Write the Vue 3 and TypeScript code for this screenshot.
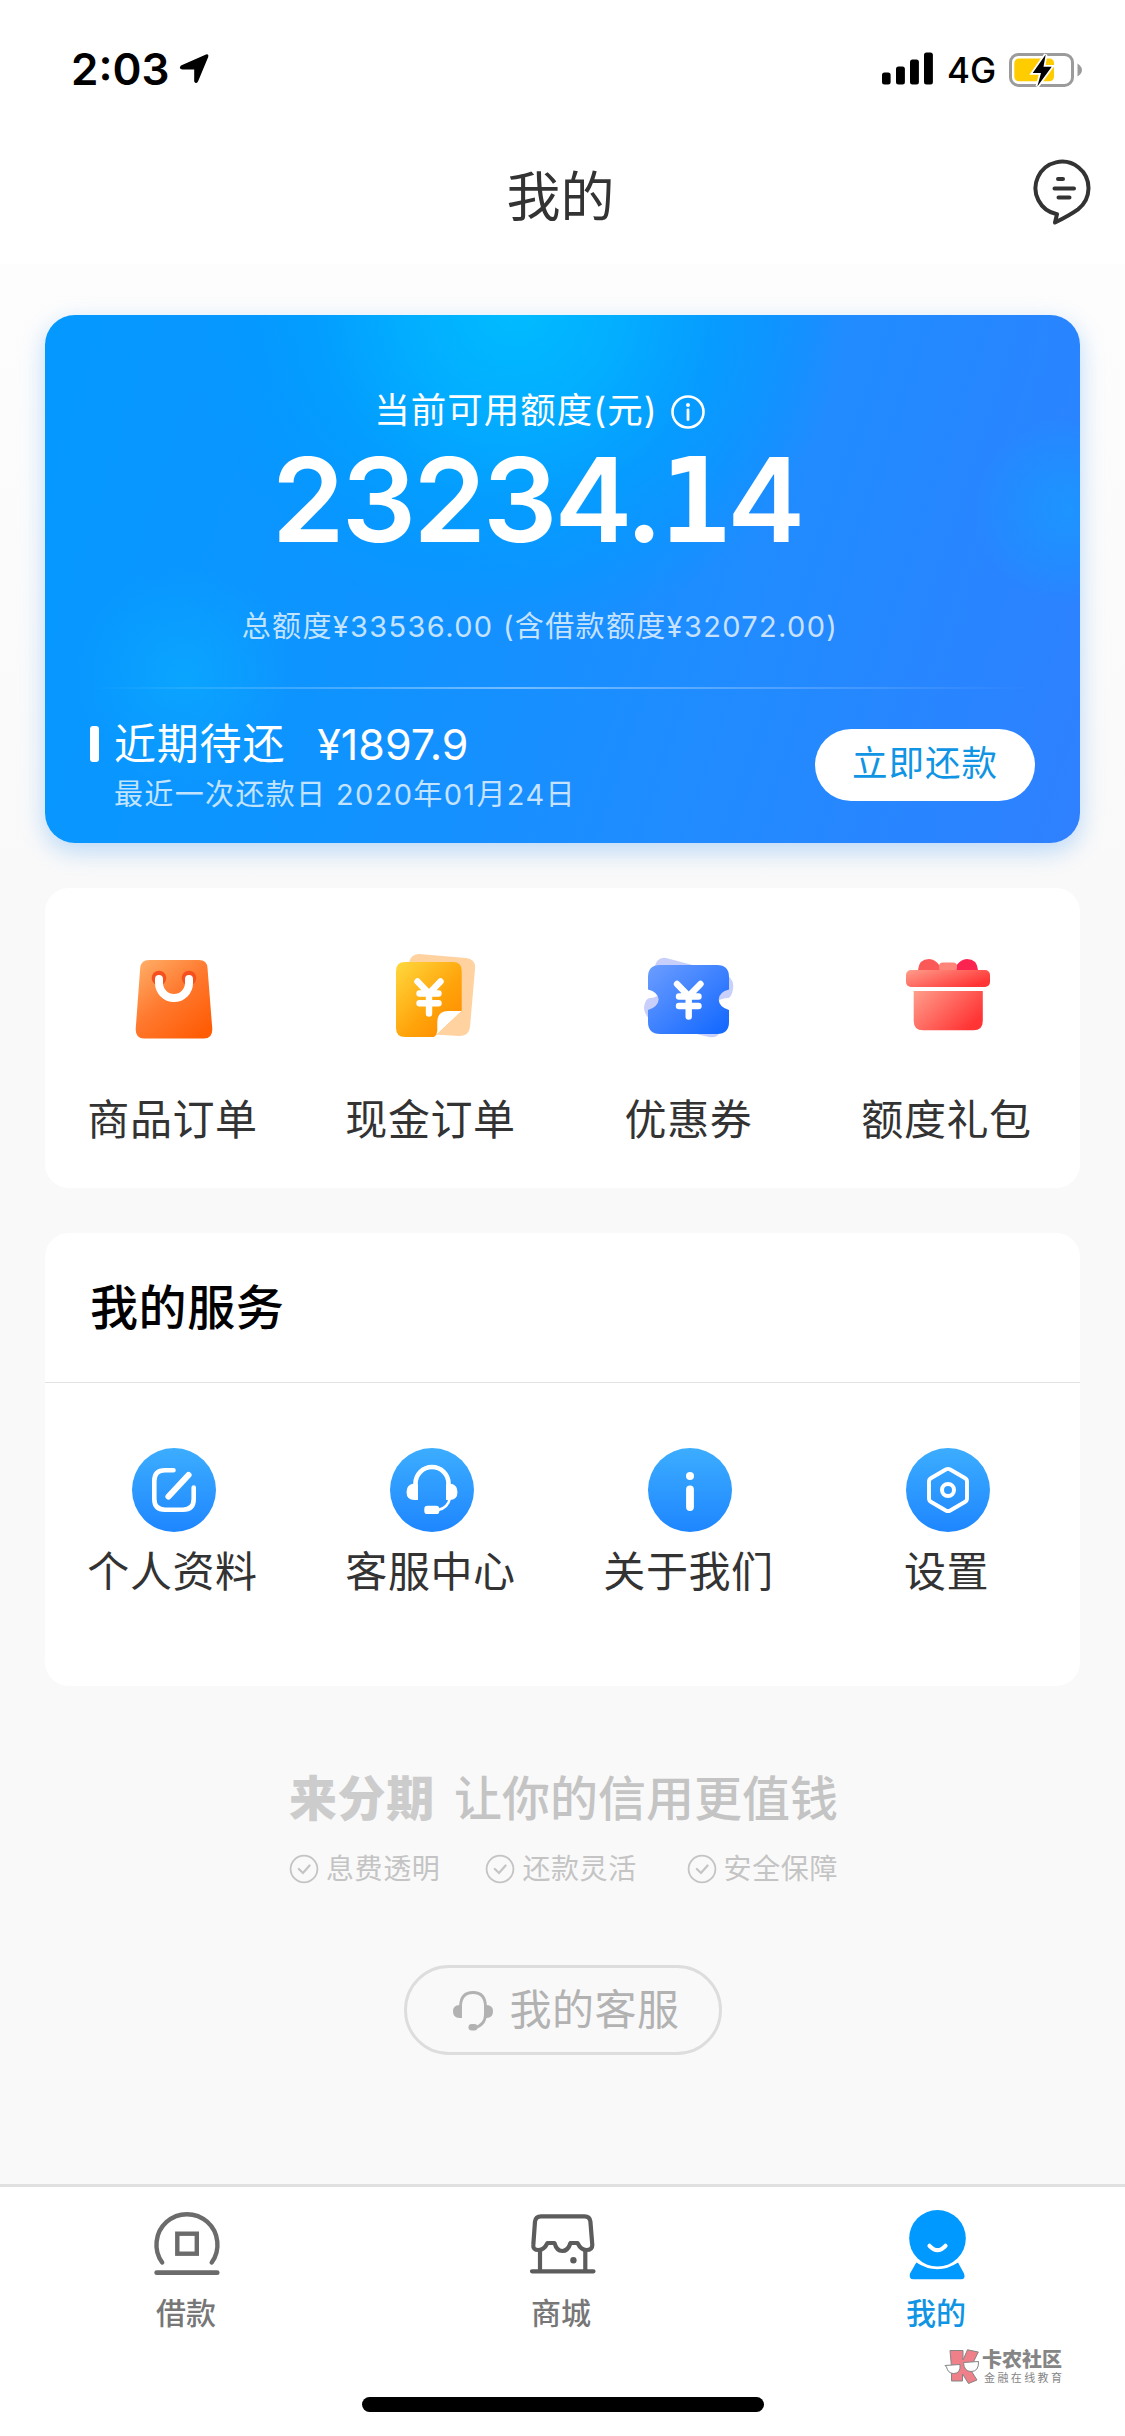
<script setup lang="ts">
interface Entry {
  key: string
  label: string
}

const orders: Entry[] = [
  { key: 'bag', label: '商品订单' },
  { key: 'cash', label: '现金订单' },
  { key: 'coupon', label: '优惠券' },
  { key: 'gift', label: '额度礼包' },
]

const services: Entry[] = [
  { key: 'profile', label: '个人资料' },
  { key: 'support', label: '客服中心' },
  { key: 'about', label: '关于我们' },
  { key: 'settings', label: '设置' },
]

const promises: string[] = ['息费透明', '还款灵活', '安全保障']

const tabs: Entry[] = [
  { key: 'loan', label: '借款' },
  { key: 'mall', label: '商城' },
  { key: 'me', label: '我的' },
]
const activeTab = 'me'
</script>

<template>
  <div class="screen">
    <header class="header">
      <div class="status">
        <span class="time">2:03</span>
        <svg class="locate" width="32" height="32" viewBox="0 0 32 32">
          <path d="M3 12.5 28 1.5Q31 .8 30.2 4L20 28.500Q18 31.500 16.200 28.500V16.500H4.500Q0 15.500 3 12.500Z" />
        </svg>
        <div class="status-right">
          <svg width="52" height="34" viewBox="0 0 52 34">
            <rect x="0" y="20.500" width="8.600" height="12" rx="2.500" />
            <rect x="14" y="14.500" width="8.900" height="18" rx="2.500" />
            <rect x="28" y="7.500" width="8.900" height="25" rx="2.500" />
            <rect x="42" y=".5" width="8.900" height="32" rx="2.500" />
          </svg>
          <span class="net">4G</span>
          <svg width="76" height="40" viewBox="0 0 76 40">
            <rect x="3.500" y="5.400" width="62" height="31" rx="8" fill="#fff" stroke="#9b9b9b" stroke-width="3" />
            <rect x="7.300" y="9.500" width="39.700" height="22.700" rx="4.500" fill="#ffcc00" />
            <path d="M70.500 14.500Q75 17.500 75 21T70.500 27.500Z" fill="#9b9b9b" />
            <path d="M38.700 5.500 25.700 24H34L30.300 37.500 44.700 17.700H36.500Z" fill="#000" stroke="#fff" stroke-width="3.500" paint-order="stroke" />
          </svg>
        </div>
      </div>
      <div class="nav">
        <h1>我的</h1>
        <svg class="message" width="60" height="68" viewBox="0 0 60 68" fill="none" stroke="#333" stroke-width="4" stroke-linecap="round" stroke-linejoin="round">
          <path d="M25 55.200A26.500 26.500 0 1 1 46 50.300Q38 56 23 63.500L25 55.200" />
          <path d="M26 20H31M22.500 29.500H42M26.500 38.500H37.500" />
        </svg>
      </div>
    </header>

    <main class="body">
      <section class="quota">
        <div class="quota-main">
          <div class="quota-title">
            <span>当前可用额度(元)</span>
            <svg width="36" height="36" viewBox="0 0 36 36">
              <circle cx="18" cy="18" r="15.500" fill="none" stroke="#fff" stroke-width="2.600" />
              <circle cx="18" cy="11" r="2" fill="#fff" />
              <path d="M18 16V25.500" stroke="#fff" stroke-width="2.800" stroke-linecap="round" />
            </svg>
          </div>
          <div class="amount">23234<span class="dot">.</span><span class="one">1</span>4</div>
          <div class="total">总额度¥33536.00 (含借款额度¥32072.00)</div>
        </div>
        <div class="rule"></div>
        <div class="due">
          <i class="mark"></i>
          <div class="due-text">
            <div class="due-sum"><span>近期待还</span><b>¥1897.9</b></div>
            <div class="due-date">最近一次还款日 2020年01月24日</div>
          </div>
          <button class="repay"><span>立即还款</span></button>
        </div>
      </section>

      <section class="card orders">
        <div v-for="o in orders" :key="o.key" class="cell">
          <svg v-if="o.key === 'bag'" width="90" height="90" viewBox="0 0 90 90">
            <defs>
              <linearGradient id="bag" x1="0" y1="0" x2=".8" y2="1">
                <stop offset="0" stop-color="#ffb16a" /><stop offset=".5" stop-color="#ff7a30" /><stop offset="1" stop-color="#ff5c05" />
              </linearGradient>
            </defs>
            <path d="M20 5H70Q78 5 78.500 13L83.300 74Q83.500 83.500 75 83.500H15Q6.500 83.500 6.700 74L11.200 13Q12 5 20 5Z" fill="url(#bag)" />
            <circle cx="30" cy="23" r="7.300" fill="#f4511e" />
            <circle cx="60" cy="23" r="7.300" fill="#f4511e" />
            <path d="M30 24V28A15 15 0 0 0 60 28V24" fill="none" stroke="#fff" stroke-width="8" stroke-linecap="round" />
          </svg>
          <svg v-else-if="o.key === 'cash'" width="90" height="90" viewBox="0 0 90 90" overflow="visible">
            <defs>
              <linearGradient id="cash" x1="0" y1="0" x2=".9" y2="1">
                <stop offset="0" stop-color="#ffd93e" /><stop offset=".6" stop-color="#ffa30a" /><stop offset="1" stop-color="#ff8a00" />
              </linearGradient>
            </defs>
            <path d="M32-1 79 3Q89 4 88 14L83 72Q82 81 72 81L48 79.500 22 9Q23-1 32-1Z" fill="#ffd2a0" />
            <path d="M18 7H66Q74.700 7 74.700 16V56L47 82H18Q9 82 9 73V16Q9 7 18 7Z" fill="url(#cash)" />
            <path d="M74.700 56H61Q50.500 56 50.300 67V76Q50 80 47 82Z" fill="#fff" />
            <path d="M30.500 26.500 42 38.500 53.500 26.500M32.500 38.500H51.500M32.500 48.200H51.500M42 38.500V58.500" fill="none" stroke="#fff" stroke-width="6.400" stroke-linecap="round" stroke-linejoin="round" />
          </svg>
          <svg v-else-if="o.key === 'coupon'" width="90" height="90" viewBox="0 0 90 90" overflow="visible">
            <defs>
              <linearGradient id="coupon" x1="0" y1="0" x2="1" y2="1">
                <stop offset="0" stop-color="#6c9dff" /><stop offset="1" stop-color="#0f66ff" />
              </linearGradient>
            </defs>
            <path d="M21 3 76 17.500Q90 22 88 34 86.500 44 81 43.500 73 43 71 50 73 58 80 60L77 75Q72 84 64 82L14 70Q0 64-1 53 0 43 5 43 11 43 14 39L9 14Q12 1 21 3Z" fill="#c8cffa" />
            <path d="M3 34.500Q8 34 10 40L3 42ZM84 43Q77 43 75 48 76 52 84 55Z" fill="#fff" />
            <path d="M15 10H72Q84 10 84 22V34.500Q74 37 73.700 44.500 74 52 84 55V67Q84 79 72 79H15Q3 79 3 67V55Q13 52 13.700 44.500 13 37 3 34.500V22Q3 10 15 10Z" fill="url(#coupon)" />
            <path d="M32 29 43.700 41 55.500 29M34 41.500H53.500M34 51H53.500M43.700 41V61.500" fill="none" stroke="#fff" stroke-width="6.400" stroke-linecap="round" stroke-linejoin="round" />
          </svg>
          <svg v-else width="90" height="90" viewBox="0 0 90 90">
            <defs>
              <linearGradient id="gift" x1="0" y1="0" x2="1" y2=".6">
                <stop offset="0" stop-color="#ff9e8c" /><stop offset="1" stop-color="#ff3535" />
              </linearGradient>
            </defs>
            <path d="M15 15Q16 4 26 4 32 4 37 11V15Z" fill="#fb5858" />
            <path d="M53 15V11Q58 4 64 4 74 4 75 15Z" fill="#fb2450" />
            <rect x="36" y="7.500" width="18" height="9" rx="4" fill="#ff8578" />
            <rect x="3" y="15" width="84" height="17" rx="5" fill="url(#gift)" />
            <path d="M10.700 36H79.800V66Q79.800 75.300 70.500 75.300H20Q10.700 75.300 10.700 66Z" fill="url(#gift)" />
          </svg>
          <span class="cell-label">{{ o.label }}</span>
        </div>
      </section>

      <section class="card services">
        <h2>我的服务</h2>
        <div class="service-row">
          <div v-for="s in services" :key="s.key" class="cell">
            <svg width="84" height="84" viewBox="0 0 84 84" fill="none" stroke="#fff" stroke-linecap="round" stroke-linejoin="round">
              <defs>
                <linearGradient :id="'svc-' + s.key" x1="0" y1="0" x2="0" y2="1">
                  <stop offset="0" stop-color="#3cadff" /><stop offset="1" stop-color="#1e86ff" />
                </linearGradient>
              </defs>
              <circle cx="42" cy="42" r="42" :fill="`url(#svc-${s.key})`" stroke="none" />
              <template v-if="s.key === 'profile'">
                <path d="M41.500 22.300H33Q22.300 22.300 22.300 33V51Q22.300 61.700 33 61.700H51Q61.700 61.700 61.700 51V39.500" stroke-width="4.600" />
                <path d="M36.500 48.500 56.500 27" stroke-width="6.200" />
              </template>
              <template v-else-if="s.key === 'support'">
                <path d="M25.500 38V35.500A16.500 16.500 0 0 1 58.500 35.500V38" stroke-width="4.600" />
                <path d="M28 36.500V52H24.500Q16.500 52 16.500 44T24.500 35.500ZM56 36.500V52H59.500Q67.500 52 67.500 44T59.500 35.500Z" fill="#fff" stroke="none" />
                <path d="M60 50Q58 60 48 62" stroke-width="2.600" />
                <rect x="34.300" y="57.800" width="15" height="8.300" rx="3.200" fill="#fff" stroke="none" />
              </template>
              <template v-else-if="s.key === 'about'">
                <circle cx="42" cy="28" r="4" fill="#fff" stroke="none" />
                <path d="M42 41.500V59" stroke-width="7.800" />
              </template>
              <template v-else>
                <path d="M39.800 21.500Q42 20.300 44.200 21.500L58.800 30Q61 31.300 61 33.500V50.500Q61 52.700 58.800 54L44.200 62.500Q42 63.700 39.800 62.500L25.200 54Q23 52.700 23 50.500V33.500Q23 31.300 25.200 30Z" stroke-width="3.900" />
                <circle cx="42" cy="42" r="6" stroke-width="4" />
              </template>
            </svg>
            <span class="cell-label">{{ s.label }}</span>
          </div>
        </div>
      </section>

      <section class="slogan">
        <div class="slogan-line"><b>来分期</b><span>让你的信用更值钱</span></div>
        <div class="promises">
          <div v-for="p in promises" :key="p" class="promise">
            <svg width="30" height="30" viewBox="0 0 30 30" fill="none" stroke="#c4c4c4">
              <circle cx="15" cy="15" r="13.400" stroke-width="1.800" />
              <path d="M9.800 15 14 19 20.600 11.500" stroke-width="2.200" stroke-linecap="round" />
            </svg>
            <span>{{ p }}</span>
          </div>
        </div>
      </section>

      <div class="contact">
        <svg width="42" height="42" viewBox="0 0 42 42" fill="none">
          <path d="M8.500 17Q9 3.500 21 3.500T33.500 17V25Q33.500 36 22 39" stroke="#b2b2b2" stroke-width="2.800" />
          <path d="M10 16V29H7.500Q1 29 1 22.500T7.500 16ZM32 16V29H34.500Q41 29 41 22.500T34.500 16Z" fill="#b2b2b2" />
          <rect x="16.500" y="35" width="9" height="6.500" rx="3.200" fill="#b2b2b2" />
        </svg>
        <span>我的客服</span>
      </div>
    </main>

    <footer class="tabbar">
      <div v-for="t in tabs" :key="t.key" class="tab" :class="{ active: t.key === activeTab }">
        <svg v-if="t.key === 'loan'" width="72" height="72" viewBox="0 0 72 72" fill="none" stroke="#6b6b6b" stroke-width="4.400" stroke-linecap="round">
          <path d="M10.200 54.500A30.500 30.500 0 1 1 59.700 54.500" />
          <rect x="25.300" y="25.700" width="19.500" height="20" />
          <path d="M4.700 64.700H65.200" stroke-width="4.800" />
        </svg>
        <svg v-else-if="t.key === 'mall'" width="72" height="72" viewBox="0 0 72 72" fill="none" stroke="#5c5c5c" stroke-width="4.200" stroke-linecap="round" stroke-linejoin="round">
          <path d="M14 8.300H57.500Q62.800 8.300 63.400 13.500L65.300 37Q65.300 42 59.500 42 54 42 50.500 35H43.500Q41 43 35.300 43T27.500 35H20.500Q17 42 11.500 42 5.800 42 6.300 37L8 13.500Q8.700 8.300 14 8.300Z" />
          <path d="M13 43V63M58.300 43V63M5 63.300H66.500" />
          <circle cx="46.400" cy="52.300" r="3.200" fill="#5c5c5c" stroke="none" />
        </svg>
        <svg v-else width="72" height="72" viewBox="0 0 72 72">
          <circle cx="35.500" cy="30.300" r="28.300" fill="#0099ff" />
          <path d="M27.500 37.800Q35.500 46.500 43.500 37.800" fill="none" stroke="#fff" stroke-width="4.200" stroke-linecap="round" />
          <path d="M14.300 54.500Q35.500 68 56 54.500L62 65.500Q64 71.300 59 71.300H11.500Q6.500 71.300 8 65.500Z" fill="#0099ff" />
        </svg>
        <span>{{ t.label }}</span>
      </div>
      <div class="watermark">
        <svg width="36" height="38" viewBox="0 0 36 38" stroke="#858585" stroke-width="1">
          <path d="M6 2.500H19V12L23.500 1.800 34.300 4 26 21 33 32 24.500 35.500 18.500 26V33H7.500V19Z" fill="#ef7f88" />
          <path d="M1 17.500 16 16.500Q17 25.500 9.500 25.500 4 25.500 2.500 19ZM19.500 14.500 34.500 13.500Q35 23.500 27 23.500 20 23.500 19.500 14.500Z" fill="#fff" />
        </svg>
        <div class="wm-text"><b>卡农社区</b><span>金融在线教育</span></div>
      </div>
      <div class="home"></div>
    </footer>
  </div>
</template>

<style>
body {
  margin: 0;
  background: #f9f9f9;
}
</style>

<style scoped>
.screen {
  width: 1125px;
  height: 2436px;
  display: flex;
  flex-direction: column;
  overflow: hidden;
  background: linear-gradient(#fdfdfd 264px, #f9f9f9 900px);
  font-family: Inter, 'Noto Sans CJK SC', sans-serif;
  color: #333;
}
svg {
  display: block;
  flex: none;
}
.header {
  height: 264px;
  background: #fff;
  flex: none;
}
.status {
  height: 138px;
  display: flex;
  align-items: center;
  padding: 0 42px 0 71px;
  color: #000;
}
.time {
  width: 107px;
  font-size: 44px;
  font-weight: 600;
  line-height: 60px;
}
.status-right {
  margin-left: auto;
  display: flex;
  align-items: center;
}
.net {
  margin: 2px 12px 0 13px;
  width: 48px;
  font-size: 35px;
  font-weight: 500;
  line-height: 44px;
}
.nav {
  height: 126px;
  display: flex;
  align-items: center;
  justify-content: center;
  position: relative;
}
.nav h1 {
  margin: -6px 0 0 -4px;
  font-size: 54px;
  line-height: 72px;
  font-weight: 400;
}
.message {
  position: absolute;
  right: 33px;
  top: 21px;
}
.body {
  flex: 1;
  padding: 51px 45px 0;
  display: flex;
  flex-direction: column;
  align-items: center;
}
.quota {
  width: 1035px;
  height: 528px;
  box-sizing: border-box;
  border-radius: 30px;
  color: #fff;
  background:
    radial-gradient(circle at 470px -10px, #00bcff 0, rgba(0, 178, 255, 0.85) 110px, rgba(0, 160, 255, 0.75) 200px, rgba(0, 155, 255, 0.45) 270px, rgba(0, 150, 255, 0) 330px),
    radial-gradient(circle at 1025px 195px, rgba(20, 160, 255, 0.6) 0, rgba(25, 150, 255, 0.4) 60px, rgba(25, 150, 255, 0) 95px),
    radial-gradient(circle at 140px 360px, rgba(10, 175, 255, 0.6) 0, rgba(10, 160, 255, 0) 110px),
    linear-gradient(108deg, #0499ff 0%, #0f93ff 36%, #218bff 68%, #2f80ff 100%);
  box-shadow: 0 8px 24px rgba(50, 145, 245, 0.32);
}
.quota-main {
  height: 372px;
  padding: 75px 45px 0 0;
  box-sizing: border-box;
  display: flex;
  flex-direction: column;
  align-items: center;
}
.quota-title {
  height: 44px;
  display: flex;
  align-items: center;
  gap: 12px;
  font-size: 35.5px;
  line-height: 44px;
  letter-spacing: 1px;
}
.quota-title span {
  margin-top: -2px;
}
.amount {
  height: 100px;
  margin-top: 16px;
  margin-left: -6px;
  line-height: 100px;
  font-size: 117px;
  font-weight: 600;
  letter-spacing: -3px;
  white-space: nowrap;
}
.one {
  font-family: 'DejaVu Sans Mono', monospace;
  font-weight: 700;
}
.total {
  margin-top: 57px;
  line-height: 40px;
  font-size: 29px;
  letter-spacing: 1.350px;
  color: rgba(255, 255, 255, 0.75);
  white-space: nowrap;
}
.rule {
  height: 2px;
  margin: 0 45px;
  background: linear-gradient(90deg, rgba(255, 255, 255, 0), rgba(255, 255, 255, 0.4) 45%, rgba(255, 255, 255, 0));
}
.due {
  display: flex;
  padding: 30px 45px 0;
}
.mark {
  width: 9px;
  height: 36px;
  margin-top: 7px;
  border-radius: 3px;
  background: #fff;
}
.due-text {
  flex: 1;
  margin-left: 15px;
}
.due-sum {
  display: flex;
  line-height: 50px;
  font-size: 42px;
  letter-spacing: 0.8px;
}
.due-sum b {
  margin-left: 32px;
  font-size: 43px;
  font-weight: 400;
  letter-spacing: 0;
}
.due-date {
  margin-top: 7px;
  line-height: 38px;
  font-size: 29px;
  letter-spacing: 1.350px;
  color: rgba(255, 255, 255, 0.75);
}
.repay {
  width: 220px;
  height: 72px;
  margin-top: 10px;
  padding: 0;
  border: 0;
  border-radius: 36px;
  background: #fff;
  color: #1094e4;
  font: inherit;
  font-size: 35.5px;
  line-height: 69px;
  letter-spacing: 1px;
}
.repay span {
  display: block;
  height: 72px;
}
.card {
  width: 1035px;
  box-sizing: border-box;
  margin-top: 45px;
  background: #fff;
  border-radius: 24px;
}
.orders {
  height: 300px;
  padding-top: 67px;
  display: flex;
}
.cell {
  width: 258px;
  display: flex;
  flex-direction: column;
  align-items: center;
}
.cell-label {
  font-size: 42px;
  line-height: 56px;
  letter-spacing: 0.6px;
  margin-right: 3px;
}
.orders .cell-label {
  margin-top: 47px;
}
.services {
  height: 453px;
}
.services h2 {
  height: 149px;
  margin: 0;
  padding-left: 45px;
  line-height: 150px;
  font-size: 48px;
  letter-spacing: 0.6px;
  font-weight: 500;
  color: #000;
  border-bottom: 1px solid #e2e2e2;
}
.service-row {
  display: flex;
  padding-top: 65px;
}
.service-row .cell-label {
  margin-top: 12px;
}
.slogan {
  width: 549px;
  margin: 81px 0 0 2px;
  color: #c4c4c4;
}
.slogan-line {
  display: flex;
  justify-content: space-between;
  line-height: 64px;
  font-size: 48px;
  white-space: nowrap;
}
.slogan-line b {
  font-weight: 900;
  letter-spacing: 0.6px;
  color: #ccc;
}
.slogan-line span {
  font-weight: 500;
}
.promises {
  display: flex;
  margin-top: 18px;
}
.promise {
  display: flex;
  align-items: center;
  gap: 7px;
  font-size: 28px;
  line-height: 40px;
  letter-spacing: 0.6px;
}
.promise:nth-child(2) {
  margin-left: 45px;
}
.promise:nth-child(3) {
  margin-left: auto;
}
.contact {
  box-sizing: border-box;
  width: 318px;
  height: 90px;
  margin-top: 76px;
  border: 3px solid #ddd;
  border-radius: 45px;
  display: flex;
  align-items: center;
  padding-left: 45px;
  gap: 16px;
  font-size: 42px;
  line-height: 56px;
  letter-spacing: 0.5px;
  color: #b2b2b2;
}
.tabbar {
  position: relative;
  flex: none;
  height: 252px;
  box-sizing: border-box;
  border-top: 3px solid #e0e0e0;
  background: #fff;
  display: flex;
}
.tab {
  width: 375px;
  padding-top: 21px;
  display: flex;
  flex-direction: column;
  align-items: center;
  font-size: 30px;
  font-weight: 500;
  line-height: 40px;
  color: #777;
}
.tab span {
  margin-top: 13px;
  margin-right: 3px;
}
.tab.active {
  color: #1094e4;
}
.watermark {
  position: absolute;
  left: 944px;
  top: 161px;
  display: flex;
  color: #858585;
}
.wm-text {
  margin-left: 2px;
  width: 82px;
}
.wm-text b {
  display: block;
  font-size: 20px;
  font-weight: 900;
  line-height: 24px;
}
.wm-text span {
  display: block;
  margin-left: 2px;
  font-size: 11px;
  line-height: 12px;
  letter-spacing: 2.400px;
  white-space: nowrap;
}
.home {
  position: absolute;
  left: 362px;
  bottom: 24px;
  width: 402px;
  height: 15px;
  border-radius: 8px;
  background: #000;
}
</style>
